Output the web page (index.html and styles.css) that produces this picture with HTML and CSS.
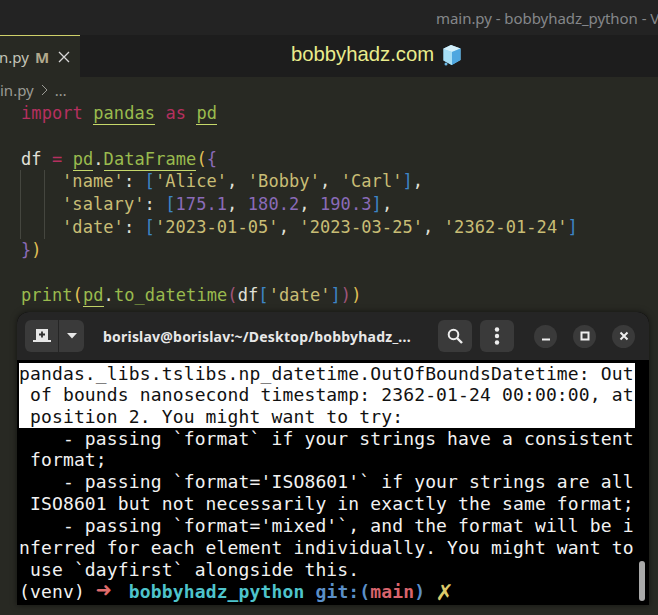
FILE: index.html
```html
<!DOCTYPE html>
<html lang="en">
<head>
<meta charset="utf-8">
<title>main.py - bobbyhadz_python</title>
<link rel="stylesheet" href="styles.css">
</head>
<body>
<div class="app">
  <header class="titlebar"><span class="wintitle">main.py - bobbyhadz_python - V</span></header>
  <div class="tabs">
    <div class="tab"><span class="tabname">n.py</span><span class="tabm">M</span>
      <svg class="tabx" width="12" height="12" viewBox="0 0 12 12"><path d="M1 1l10 10M11 1L1 11" stroke="#d8d8d8" stroke-width="1.3" fill="none"/></svg>
    </div>
    <div class="brand"><span class="brandname">bobbyhadz.com</span>
      <svg class="cube" width="21" height="22" viewBox="0 0 21 22">
        <path d="M10 1l9.500 3.500v11.500l-9 5-8-4.500v-12z" fill="#8fd0f0"/>
        <path d="M10 1l9.500 3.500-8.500 3.500-9-3z" fill="#d4f0fb"/>
        <path d="M11 8l8.500-3.500v11.500l-8.500 5z" fill="#4fa7e0"/>
        <path d="M2.500 5l8.500 3v13l-8.500-4.500z" fill="#a6def5"/>
        <circle cx="5" cy="20" r="1.500" fill="#6cb9e6"/>
      </svg>
    </div>
  </div>
  <div class="crumbs"><span>in.py</span><svg width="7" height="12" viewBox="0 0 7 12"><path d="M1 1l5 5-5 5" stroke="#9a9a94" stroke-width="1" fill="none"/></svg><span>…</span></div>
  <main class="code">
    <div class="ln"><span class="kw">import</span> <span class="grn ul">pandas</span> <span class="kw">as</span> <span class="grn ul">pd</span></div>
    <div class="ln"></div>
    <div class="ln"><span class="wht">df</span> <span class="kw">=</span> <span class="grn ul">pd</span><span class="wht">.</span><span class="grn ul">DataFrame</span><span class="yel">(</span><span class="pur">{</span></div>
    <div class="ln guides"><span class="str">'name'</span><span class="wht">:</span> <span class="blu">[</span><span class="str">'Alice'</span><span class="wht">,</span> <span class="str">'Bobby'</span><span class="wht">,</span> <span class="str">'Carl'</span><span class="blu">]</span><span class="wht">,</span></div>
    <div class="ln guides"><span class="str">'salary'</span><span class="wht">:</span> <span class="blu">[</span><span class="pur">175.1</span><span class="wht">,</span> <span class="pur">180.2</span><span class="wht">,</span> <span class="pur">190.3</span><span class="blu">]</span><span class="wht">,</span></div>
    <div class="ln guides"><span class="str">'date'</span><span class="wht">:</span> <span class="blu">[</span><span class="str">'2023-01-05'</span><span class="wht">,</span> <span class="str">'2023-03-25'</span><span class="wht">,</span> <span class="str">'2362-01-24'</span><span class="blu">]</span></div>
    <div class="ln"><span class="pur">}</span><span class="yel">)</span></div>
    <div class="ln"></div>
    <div class="ln"><span class="grn">print</span><span class="yel">(</span><span class="grn ul">pd</span><span class="wht">.</span><span class="grn">to_datetime</span><span class="plum">(</span><span class="wht">df</span><span class="blu">[</span><span class="str">'date'</span><span class="blu">]</span><span class="plum">)</span><span class="yel">)</span></div>
  </main>
</div>
<section class="term">
  <div class="termbar">
    <div class="splitbtn">
      <span class="seg seg-a"><svg width="18" height="16" viewBox="0 0 18 16"><path d="M3 1h12v11h3v2H0v-2h3z" fill="#e6e6e6"/><path d="M9 3.500v6M6 6.500h6" stroke="#2f2f2f" stroke-width="1.800"/></svg></span>
      <span class="seg seg-b"><svg width="10" height="6" viewBox="0 0 10 6"><path d="M0 0h10L5 5.500z" fill="#e6e6e6"/></svg></span>
    </div>
    <div class="termtitle">borislav@borislav:~/Desktop/bobbyhadz_...</div>
    <span class="sqbtn"><svg width="16" height="16" viewBox="0 0 16 16"><circle cx="6.500" cy="6.500" r="4.800" fill="none" stroke="#eee" stroke-width="2"/><path d="M10 10l5 5" stroke="#eee" stroke-width="2.400"/></svg></span>
    <span class="sqbtn sq2"><svg width="6" height="18" viewBox="0 0 6 18"><circle cx="3" cy="2.500" r="2.200" fill="#eee"/><circle cx="3" cy="9" r="2.200" fill="#eee"/><circle cx="3" cy="15.500" r="2.200" fill="#eee"/></svg></span>
    <div class="winbtns">
      <span class="round"><svg width="10" height="10" viewBox="0 0 10 10"><path d="M1 8.500h8" stroke="#eee" stroke-width="2"/></svg></span>
      <span class="round"><svg width="10" height="10" viewBox="0 0 10 10"><rect x="1.500" y="1.500" width="7" height="7" fill="none" stroke="#eee" stroke-width="2"/></svg></span>
      <span class="round"><svg width="10" height="10" viewBox="0 0 10 10"><path d="M1.500 1.500l7 7M8.500 1.500l-7 7" stroke="#eee" stroke-width="2"/></svg></span>
    </div>
  </div>
  <div class="termbody">
    <div class="thumb"></div>
    <div class="sel">
      <div class="tl">pandas._libs.tslibs.np_datetime.OutOfBoundsDatetime: Out</div>
      <div class="tl"> of bounds nanosecond timestamp: 2362-01-24 00:00:00, at</div>
      <div class="tl"> position 2. You might want to try:</div>
    </div>
    <div class="tl">    - passing `format` if your strings have a consistent</div>
    <div class="tl"> format;</div>
    <div class="tl">    - passing `format='ISO8601'` if your strings are all</div>
    <div class="tl"> ISO8601 but not necessarily in exactly the same format;</div>
    <div class="tl">    - passing `format='mixed'`, and the format will be i</div>
    <div class="tl">nferred for each element individually. You might want to</div>
    <div class="tl"> use `dayfirst` alongside this.</div>
    <div class="tl">(venv) <b class="arrow">➜</b>  <b class="cyan">bobbyhadz_python</b> <b class="gitb">git:(</b><b class="red">main</b><b class="gitb">)</b> <b class="x">✗</b></div>
  </div>
</section>
</body>
</html>
```
FILE: styles.css
```css
* { box-sizing: border-box; }
html, body { margin: 0; padding: 0; height: 100%; overflow: hidden; background: #282923; }
.app { display: flex; flex-direction: column; height: 615px; }
.titlebar { height: 35px; background: #232323; display: flex; align-items: center; padding-left: 436px; white-space: nowrap; overflow: hidden; flex: none; }
.wintitle { font: 15px "Noto Sans", sans-serif; letter-spacing: -.05px; color: #85878a; }
.tabs { height: 42px; background: #1d1d1d; display: flex; flex: none; }
.tab { width: 80px; background: #282923; border-top: 1px solid #cfd06a; display: flex; align-items: center; font: 15px "Noto Sans", sans-serif; color: #c4c4b8; white-space: nowrap; }
.tabname { margin-left: -1px; }
.tabm { margin-left: 6px; font-weight: 700; color: #b2a98d; }
.tabx { margin-left: 9px; }
.brand { display: flex; align-items: center; margin-left: 211px; gap: 7px; padding-bottom: 3px; }
.brandname { font: 20.300px "Liberation Sans", sans-serif; color: #e9ec8c; }
.crumbs { height: 25px; flex: none; display: flex; align-items: center; gap: 7px; font: 15px "Noto Sans", sans-serif; color: #9a9a94; }
.code { padding-left: 21px; font: 17px/22.750px "DejaVu Sans Mono", monospace; letter-spacing: .08px; flex: none; }
.ln { height: 22.750px; position: relative; white-space: pre; }
.guides { padding-left: 41px; }
.guides::before { content: ""; position: absolute; left: -1px; top: 0; bottom: 0; width: 23px; border-right: 1px solid #45463f; border-left: 1px solid #45463f; }
.kw { color: #b5305f; }
.grn { color: #9abb4e; }
.ul { border-bottom: 1px solid #c6d86a; padding-bottom: 1px; }
.wht { color: #e0e0d8; }
.yel { color: #e0c157; }
.pur { color: #8a6bb8; }
.plum { color: #a0557a; }
.blu { color: #3d86c6; }
.str { color: #c8bd75; }
.term { position: absolute; left: 17px; top: 312px; width: 632px; height: 293px; background: #000; border-radius: 12px 12px 0 0; overflow: hidden; box-shadow: 0 0 6px rgba(0,0,0,.55); }
.termbar { height: 48px; background: #252525; display: flex; align-items: center; padding: 0 0 0 8px; }
.splitbtn { display: flex; height: 32px; border-radius: 6px; overflow: hidden; flex: none; }
.seg { background: #3a3a3a; display: flex; align-items: center; justify-content: center; height: 32px; }
.seg-a { width: 34px; border-right: 1px solid #252525; }
.seg-b { width: 25px; }
.termtitle { margin-left: 19px; width: 335px; font: 700 14px "Noto Sans", sans-serif; letter-spacing: .21px; color: #e8e8e8; white-space: nowrap; flex: none; }
.sqbtn { width: 34px; height: 32px; background: #3a3a3a; border-radius: 6px; display: flex; align-items: center; justify-content: center; flex: none; }
.sq2 { margin-left: 8px; }
.winbtns { display: flex; gap: 16px; margin-left: 20px; }
.round { width: 23px; height: 23px; border-radius: 50%; background: #3a3a3a; display: flex; align-items: center; justify-content: center; }
.termbody { position: relative; height: 245px; padding: 2.500px 0 0 2px; background: #000; color: #f2f2f2; font: 18px/21.900px "DejaVu Sans Mono", monospace; letter-spacing: .14px; }
.sel { background: #fff; color: #111; width: 616px; height: 65px; }
.tl { height: 21.900px; white-space: pre; }
.tl b { font-weight: 700; }
.arrow { color: #e06c6c; display: inline-block; width: 11px; font-size: 26px; line-height: 0; vertical-align: -1px; }
.cyan { color: #4ec4cc; }
.gitb { color: #5b8fc8; }
.red { color: #d8646c; }
.x { color: #dcc96a; display: inline-block; width: 11px; font-size: 27px; line-height: 0; vertical-align: -2px; }
.thumb { position: absolute; right: 4px; top: 201px; width: 6px; height: 40px; border-radius: 3px; background: #a9a9a9; }
```
